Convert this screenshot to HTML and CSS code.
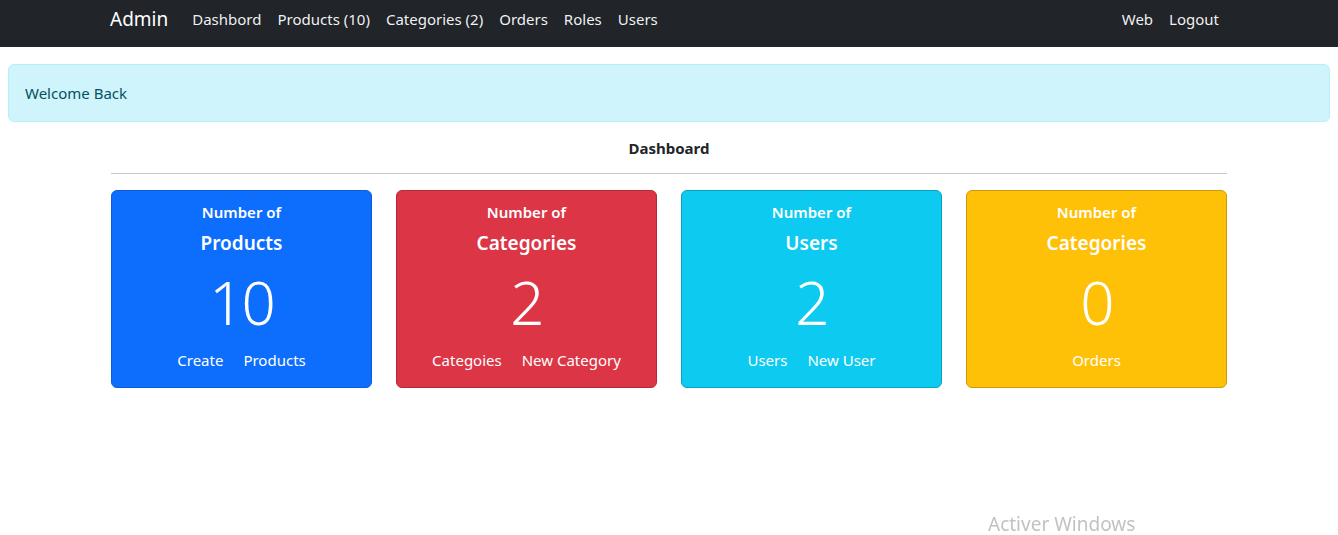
FILE: index.html
```html
<!DOCTYPE html>
<html lang="fr">
<head>
<meta charset="utf-8">
<title>Admin</title>
<link rel="stylesheet" href="styles.css">
</head>
<body>
<nav class="navbar">
  <div class="nav-inner">
    <div class="nav-left">
      <a class="brand" href="#">Admin</a>
      <a class="nav-link" href="#">Dashbord</a>
      <a class="nav-link" href="#">Products (10)</a>
      <a class="nav-link" href="#">Categories (2)</a>
      <a class="nav-link" href="#">Orders</a>
      <a class="nav-link" href="#">Roles</a>
      <a class="nav-link" href="#">Users</a>
    </div>
    <div class="nav-right">
      <a class="nav-link" href="#">Web</a>
      <a class="nav-link" href="#">Logout</a>
    </div>
  </div>
</nav>
<main class="page">
  <div class="alert">Welcome Back</div>
  <div class="content">
    <h1 class="title">Dashboard</h1>
    <hr class="rule">
    <div class="cards">
      <div class="card blue">
        <div class="card-label">Number of</div>
        <div class="card-name">Products</div>
        <div class="card-count">10</div>
        <div class="card-links"><a href="#">Create</a><a href="#">Products</a></div>
      </div>
      <div class="card red">
        <div class="card-label">Number of</div>
        <div class="card-name">Categories</div>
        <div class="card-count">2</div>
        <div class="card-links"><a href="#">Categoies</a><a href="#">New Category</a></div>
      </div>
      <div class="card cyan">
        <div class="card-label">Number of</div>
        <div class="card-name">Users</div>
        <div class="card-count">2</div>
        <div class="card-links"><a href="#">Users</a><a href="#">New User</a></div>
      </div>
      <div class="card yellow">
        <div class="card-label">Number of</div>
        <div class="card-name">Categories</div>
        <div class="card-count">0</div>
        <div class="card-links"><a href="#">Orders</a></div>
      </div>
    </div>
  </div>
</main>
<div class="watermark">Activer Windows</div>
</body>
</html>
```
FILE: styles.css
```css
* { box-sizing: border-box; }
html, body { margin: 0; padding: 0; }
body {
  font-family: "Noto Sans", "Open Sans", sans-serif;
  font-size: 15px;
  line-height: 24px;
  color: #212529;
  background: #fff;
}
a { text-decoration: none; color: inherit; }

.navbar {
  background: #212529;
  height: 47px;
}
.nav-inner {
  width: 1140px;
  margin: 0 auto;
  padding: 4px 12px 0 11px;
  height: 100%;
  display: flex;
  align-items: flex-start;
  justify-content: space-between;
}
.nav-left, .nav-right { display: flex; align-items: center; }
.brand {
  color: #fff;
  font-size: 19px;
  line-height: 30px;
  margin-right: 16px;
}
.nav-link {
  color: rgba(255,255,255,0.95);
  padding: 0 8px;
  font-size: 15px;
  line-height: 30px;
}

.page { padding: 17px 8px 0; }
.alert {
  background: #cff4fc;
  border: 1px solid #b6effb;
  color: #055160;
  border-radius: 6px;
  padding: 16px 16px;
  line-height: 24px;
}
.content {
  width: 1116px;
  margin: 0 auto;
}
.title {
  margin: 14px 0 0;
  font-size: 15px;
  line-height: 24px;
  font-weight: 700;
  text-align: center;
}
.rule {
  margin: 13px 0 16px;
  border: 0;
  border-top: 1px solid #c8c8c8;
}
.cards {
  display: grid;
  grid-template-columns: repeat(4, 1fr);
  gap: 24px;
}
.card {
  height: 198px;
  border-radius: 6px;
  color: #fff;
  text-align: center;
  padding-top: 9px;
  border: 1px solid transparent;
}
.blue { background: #0d6efd; border-color: #0b5ed7; }
.red { background: #dc3545; border-color: #b02a37; }
.cyan { background: #0dcaf0; border-color: #0aa2c0; }
.yellow { background: #ffc107; border-color: #cc9a06; }
.card-label {
  font-size: 15px;
  line-height: 24px;
  font-weight: 600;
}
.card-name {
  margin-top: 4px;
  font-size: 19px;
  line-height: 30px;
  font-weight: 600;
}
.card-count {
  margin-top: 6px;
  font-size: 60px;
  line-height: 76px;
  font-weight: 300;
  letter-spacing: -2px;
}
.card-links {
  margin-top: 8px;
  display: flex;
  justify-content: center;
  gap: 20px;
  font-size: 15px;
  line-height: 24px;
}
.watermark {
  position: fixed;
  left: 988px;
  top: 513px;
  font-size: 19px;
  line-height: 22px;
  color: #c2c2c2;
}
```
